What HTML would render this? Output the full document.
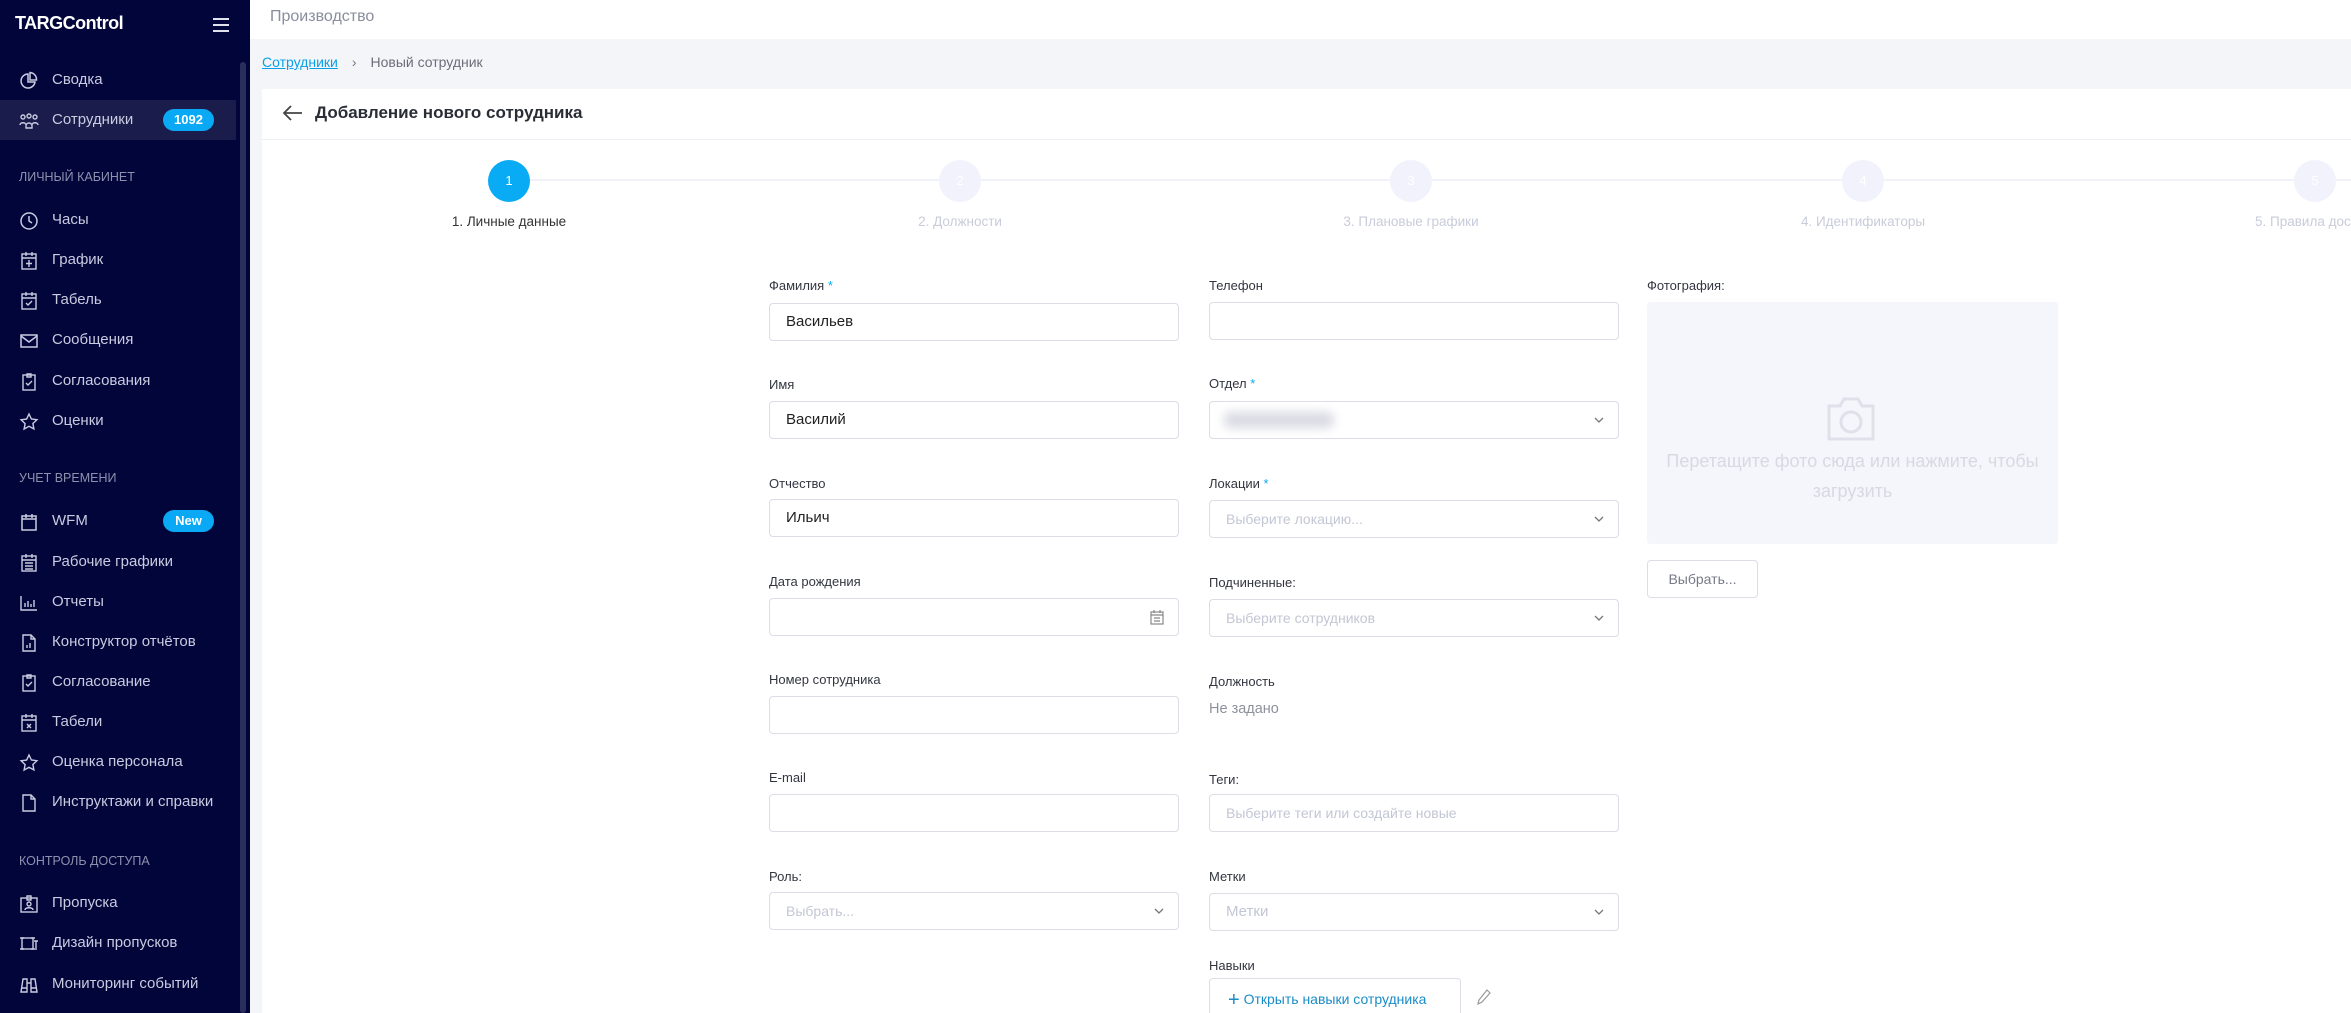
<!DOCTYPE html>
<html style="width:2351px;height:1013px;overflow:hidden"><head><meta charset="utf-8"><style>
*{box-sizing:border-box;margin:0;padding:0}
body{width:2351px;height:1013px;overflow:hidden;background:#f4f5f9;font-family:"Liberation Sans","Noto Sans CJK SC",sans-serif;position:relative}
.a{position:absolute}
#sb{left:0;top:0;width:250px;height:1013px;background:#02053a}
#sbtrack{left:240px;top:62px;width:6px;height:951px;background:#2a2e5c;border-radius:3px}
.logo{left:15px;top:13px;color:#fff;font-weight:bold;font-size:18px;letter-spacing:-0.5px}
.ham{left:213px;top:18px;width:16px}
.ham i{display:block;height:2px;background:#e0e2ee;margin-bottom:4px}
.it{left:0;width:236px;height:40px;color:#c9cbe0;font-size:15px;line-height:40px;padding-left:52px}
.it svg{position:absolute;left:19px;top:11px}
.act{background:#1a1d4c}
.sec{left:19px;color:#8e91ad;font-size:12.5px}
.badge{position:absolute;left:163px;top:9px;width:51px;height:22px;border-radius:11px;background:#0aa9f5;color:#fff;font-size:13px;font-weight:bold;line-height:22px;text-align:center}
#top{left:250px;top:0;width:2101px;height:39px;background:#fff}
.card{left:262px;top:89px;width:2089px;height:924px;background:#fff}
.lbl{color:#333640;font-size:13px}
.inp{height:38px;border:1px solid #dcdde6;border-radius:4px;background:#fff;font-size:15px;color:#222;padding-left:16px;line-height:36px}
.ph{color:#c3c6d4;font-size:14px}
.chev{position:absolute;right:14px;top:9px}
.circ{width:42px;height:42px;border-radius:21px;background:#f1f2fb;color:#fff;font-size:13px;text-align:center;line-height:42px}
.sl{font-size:13.5px;color:#c9ccd9;width:300px;text-align:center}
</style></head><body>
<div id="sb" class="a">
<div class="a logo">TARGControl</div>
<div class="a ham"><i></i><i></i><i></i></div>
<div id="sbtrack" class="a"></div>

<div class="a it" style="top:60px"><svg width="20" height="20" viewBox="0 0 20 20" fill="none" stroke="#c9cbe0" stroke-width="1.5"><path d="M9 3a7 7 0 1 0 7 8H9z"/><path d="M11 1.5a7 7 0 0 1 6.5 7.5H11z"/></svg>Сводка</div>
<div class="a it act" style="top:100px"><svg width="20" height="20" viewBox="0 0 20 20" fill="none" stroke="#c9cbe0" stroke-width="1.4"><circle cx="4" cy="6" r="2"/><circle cx="10" cy="5" r="2"/><circle cx="16" cy="6" r="2"/><path d="M1 14c0-3 6-3 6 0M7 15c0-4 6-4 6 0v2H7zM13 14c0-3 6-3 6 0"/></svg>Сотрудники<span class="badge">1092</span></div>

<div class="a sec" style="top:170px">ЛИЧНЫЙ КАБИНЕТ</div>
<div class="a it" style="top:200px"><svg width="20" height="20" viewBox="0 0 20 20" fill="none" stroke="#c9cbe0" stroke-width="1.5"><circle cx="10" cy="10" r="8"/><path d="M10 5v5l3 2"/></svg>Часы</div>
<div class="a it" style="top:240px"><svg width="20" height="20" viewBox="0 0 20 20" fill="none" stroke="#c9cbe0" stroke-width="1.4"><rect x="3" y="3" width="14" height="15"/><path d="M3 7h14M7 1v4M13 1v4M10 9v7M7 12.5h6"/></svg>График</div>
<div class="a it" style="top:280px"><svg width="20" height="20" viewBox="0 0 20 20" fill="none" stroke="#c9cbe0" stroke-width="1.4"><rect x="3" y="3" width="14" height="15"/><path d="M3 7h14M7 1v4M13 1v4M7 12l2 2 4-4"/></svg>Табель</div>
<div class="a it" style="top:320px"><svg width="20" height="20" viewBox="0 0 20 20" fill="none" stroke="#c9cbe0" stroke-width="1.5"><rect x="2" y="4" width="16" height="12"/><path d="M2 5l8 6 8-6"/></svg>Сообщения</div>
<div class="a it" style="top:361px"><svg width="20" height="20" viewBox="0 0 20 20" fill="none" stroke="#c9cbe0" stroke-width="1.4"><rect x="4" y="3" width="12" height="15"/><path d="M8 2h4v3H8zM7 11l2 2 4-4"/></svg>Согласования</div>
<div class="a it" style="top:401px"><svg width="20" height="20" viewBox="0 0 20 20" fill="none" stroke="#c9cbe0" stroke-width="1.4"><path d="M10 2l2.4 5 5.5.7-4 3.8 1 5.4L10 14.3 5.1 17l1-5.4-4-3.8 5.5-.7z"/></svg>Оценки</div>

<div class="a sec" style="top:471px">УЧЕТ ВРЕМЕНИ</div>
<div class="a it" style="top:501px"><svg width="20" height="20" viewBox="0 0 20 20" fill="none" stroke="#c9cbe0" stroke-width="1.5"><rect x="3" y="4" width="14" height="14"/><path d="M3 7h14M7 2v4M13 2v4"/></svg>WFM<span class="badge" style="top:9px">New</span></div>
<div class="a it" style="top:542px"><svg width="20" height="20" viewBox="0 0 20 20" fill="none" stroke="#c9cbe0" stroke-width="1.4"><rect x="3" y="3" width="14" height="15"/><path d="M3 7h14M7 1v4M13 1v4M6 10h8M6 13h8M6 16h8"/></svg>Рабочие графики</div>
<div class="a it" style="top:582px"><svg width="20" height="20" viewBox="0 0 20 20" fill="none" stroke="#c9cbe0" stroke-width="1.4"><path d="M2 3v14h16M6 14v-4M9 14V8M12 14v-3M15 14V7"/></svg>Отчеты</div>
<div class="a it" style="top:622px"><svg width="20" height="20" viewBox="0 0 20 20" fill="none" stroke="#c9cbe0" stroke-width="1.4"><path d="M4 2h8l4 4v12H4zM12 2v4h4M8 15v-3M11 15v-5"/></svg>Конструктор отчётов</div>
<div class="a it" style="top:662px"><svg width="20" height="20" viewBox="0 0 20 20" fill="none" stroke="#c9cbe0" stroke-width="1.4"><rect x="4" y="3" width="12" height="15"/><path d="M8 2h4v3H8zM7 11l2 2 4-4"/></svg>Согласование</div>
<div class="a it" style="top:702px"><svg width="20" height="20" viewBox="0 0 20 20" fill="none" stroke="#c9cbe0" stroke-width="1.4"><rect x="3" y="3" width="14" height="15"/><path d="M3 7h14M7 1v4M13 1v4M8 11l4 4M12 11l-4 4"/></svg>Табели</div>
<div class="a it" style="top:742px"><svg width="20" height="20" viewBox="0 0 20 20" fill="none" stroke="#c9cbe0" stroke-width="1.4"><path d="M10 2l2.4 5 5.5.7-4 3.8 1 5.4L10 14.3 5.1 17l1-5.4-4-3.8 5.5-.7z"/></svg>Оценка персонала</div>
<div class="a it" style="top:782px"><svg width="20" height="20" viewBox="0 0 20 20" fill="none" stroke="#c9cbe0" stroke-width="1.4"><path d="M4 2h8l4 4v12H4zM12 2v4h4"/></svg>Инструктажи и справки</div>

<div class="a sec" style="top:854px">КОНТРОЛЬ ДОСТУПА</div>
<div class="a it" style="top:883px"><svg width="20" height="20" viewBox="0 0 20 20" fill="none" stroke="#c9cbe0" stroke-width="1.4"><rect x="2" y="4" width="16" height="14"/><path d="M8 2h4v4H8z"/><circle cx="10" cy="10" r="2"/><path d="M6 16c0-3 8-3 8 0"/></svg>Пропуска</div>
<div class="a it" style="top:923px"><svg width="20" height="20" viewBox="0 0 20 20" fill="none" stroke="#c9cbe0" stroke-width="1.4"><rect x="3" y="4" width="11" height="11"/><path d="M1 4h4M1 15h4M12 4h4M12 15h4M15 7h4M17 7v9"/></svg>Дизайн пропусков</div>
<div class="a it" style="top:964px"><svg width="20" height="20" viewBox="0 0 20 20" fill="none" stroke="#c9cbe0" stroke-width="1.4"><path d="M2 17l2-13h4v13zM12 17V4h4l2 13zM8 8h4M2 13h6M12 13h6"/></svg>Мониторинг событий</div>
</div>

<div id="top" class="a"><div class="a" style="left:20px;top:8px;font-size:16px;color:#8a8d9c">Производство</div></div>
<div class="a" style="left:262px;top:54px;font-size:14px"><span style="color:#0aa0e8;text-decoration:underline">Сотрудники</span><span style="color:#777;margin:0 14px 0 14px">›</span><span style="color:#6b6e7a">Новый сотрудник</span></div>

<div class="a card">
<div class="a" style="left:0;top:50px;width:2089px;height:1px;background:#eceef3"></div>
<svg class="a" style="left:20px;top:15px" width="22" height="18" viewBox="0 0 22 18" fill="none" stroke="#444" stroke-width="1.8"><path d="M20 9H3M9 2L2 9l7 7"/></svg>
<div class="a" style="left:53px;top:14px;font-size:17px;font-weight:bold;color:#2a2c36">Добавление нового сотрудника</div>
</div>

<div class="a" style="left:509px;top:179px;width:1842px;height:2px;background:#f0f1f9"></div>
<div class="a circ" style="left:488px;top:160px;background:#0aabf5">1</div>
<div class="a circ" style="left:939px;top:160px">2</div>
<div class="a circ" style="left:1390px;top:160px">3</div>
<div class="a circ" style="left:1842px;top:160px">4</div>
<div class="a circ" style="left:2294px;top:160px">5</div>
<div class="a sl" style="left:359px;top:214px;color:#333">1. Личные данные</div>
<div class="a sl" style="left:810px;top:214px">2. Должности</div>
<div class="a sl" style="left:1261px;top:214px">3. Плановые графики</div>
<div class="a sl" style="left:1713px;top:214px">4. Идентификаторы</div>
<div class="a" style="left:2255px;top:214px;font-size:13.5px;color:#c9ccd9;white-space:nowrap">5. Правила дос</div>

<div class="a lbl" style="left:769px;top:278px">Фамилия <span style="color:#0aa9f5">*</span></div>
<div class="a inp" style="left:769px;top:303px;width:410px">Васильев</div>
<div class="a lbl" style="left:769px;top:377px">Имя</div>
<div class="a inp" style="left:769px;top:401px;width:410px">Василий</div>
<div class="a lbl" style="left:769px;top:476px">Отчество</div>
<div class="a inp" style="left:769px;top:499px;width:410px">Ильич</div>
<div class="a lbl" style="left:769px;top:574px">Дата рождения</div>
<div class="a inp" style="left:769px;top:598px;width:410px"><svg class="chev" style="right:14px;top:10px" width="14" height="16" viewBox="0 0 14 16" fill="none" stroke="#888" stroke-width="1.2"><rect x="1" y="3" width="12" height="12"/><path d="M1 6h12M4 1v3M10 1v3M4 9h6M4 12h6"/></svg></div>
<div class="a lbl" style="left:769px;top:672px">Номер сотрудника</div>
<div class="a inp" style="left:769px;top:696px;width:410px"></div>
<div class="a lbl" style="left:769px;top:770px">E-mail</div>
<div class="a inp" style="left:769px;top:794px;width:410px"></div>
<div class="a lbl" style="left:769px;top:869px">Роль:</div>
<div class="a inp ph" style="left:769px;top:892px;width:410px">Выбрать...<svg class="chev" width="10" height="18" viewBox="0 0 10 18" fill="none" stroke="#777" stroke-width="1.3"><path d="M1 7l4 4 4-4"/></svg></div>

<div class="a lbl" style="left:1209px;top:278px">Телефон</div>
<div class="a inp" style="left:1209px;top:302px;width:410px"></div>
<div class="a lbl" style="left:1209px;top:376px">Отдел <span style="color:#0aa9f5">*</span></div>
<div class="a inp" style="left:1209px;top:401px;width:410px"><div class="a" style="left:14px;top:10px;width:110px;height:16px;background:#d9dae2;filter:blur(5px);border-radius:6px"></div><svg class="chev" width="10" height="18" viewBox="0 0 10 18" fill="none" stroke="#777" stroke-width="1.3"><path d="M1 7l4 4 4-4"/></svg></div>
<div class="a lbl" style="left:1209px;top:476px">Локации <span style="color:#0aa9f5">*</span></div>
<div class="a inp ph" style="left:1209px;top:500px;width:410px">Выберите локацию...<svg class="chev" width="10" height="18" viewBox="0 0 10 18" fill="none" stroke="#777" stroke-width="1.3"><path d="M1 7l4 4 4-4"/></svg></div>
<div class="a lbl" style="left:1209px;top:575px">Подчиненные:</div>
<div class="a inp ph" style="left:1209px;top:599px;width:410px">Выберите сотрудников<svg class="chev" width="10" height="18" viewBox="0 0 10 18" fill="none" stroke="#777" stroke-width="1.3"><path d="M1 7l4 4 4-4"/></svg></div>
<div class="a lbl" style="left:1209px;top:674px">Должность</div>
<div class="a" style="left:1209px;top:701px;font-size:14.5px;color:#8e919e">Не задано</div>
<div class="a lbl" style="left:1209px;top:772px">Теги:</div>
<div class="a inp ph" style="left:1209px;top:794px;width:410px">Выберите теги или создайте новые</div>
<div class="a lbl" style="left:1209px;top:869px">Метки</div>
<div class="a inp ph" style="left:1209px;top:893px;width:410px;font-size:15px">Метки<svg class="chev" width="10" height="18" viewBox="0 0 10 18" fill="none" stroke="#777" stroke-width="1.3"><path d="M1 7l4 4 4-4"/></svg></div>
<div class="a lbl" style="left:1209px;top:958px">Навыки</div>
<div class="a" style="left:1209px;top:978px;width:252px;height:35px;border:1px solid #dcdde6;border-bottom:none;border-radius:4px 4px 0 0;color:#1a8cc7;font-size:14px;line-height:40px;padding-left:18px"><span style="font-size:20px;vertical-align:-2px">+</span> Открыть навыки сотрудника</div>
<svg class="a" style="left:1476px;top:988px" width="16" height="18" viewBox="0 0 16 18" fill="none" stroke="#999" stroke-width="1.2"><path d="M11 2l3 3-8 9-4 2 1-4z"/></svg>

<div class="a lbl" style="left:1647px;top:278px">Фотография:</div>
<div class="a" style="left:1647px;top:302px;width:411px;height:242px;background:#f5f6fb;border-radius:3px"></div>
<svg class="a" style="left:1826px;top:394px" width="50" height="48" viewBox="0 0 50 48" fill="none" stroke="#dfe1ea" stroke-width="3"><path d="M3 12h11l4-7h14l4 7h11v33H3z"/><circle cx="25" cy="28" r="10"/></svg>
<div class="a" style="left:1657px;top:446px;width:391px;text-align:center;font-size:18px;line-height:30px;color:#d7d9e3">Перетащите фото сюда или нажмите, чтобы загрузить</div>
<div class="a" style="left:1647px;top:560px;width:111px;height:38px;border:1px solid #dcdde6;border-radius:4px;font-size:14px;color:#777a88;line-height:36px;text-align:center">Выбрать...</div>
</body></html>
